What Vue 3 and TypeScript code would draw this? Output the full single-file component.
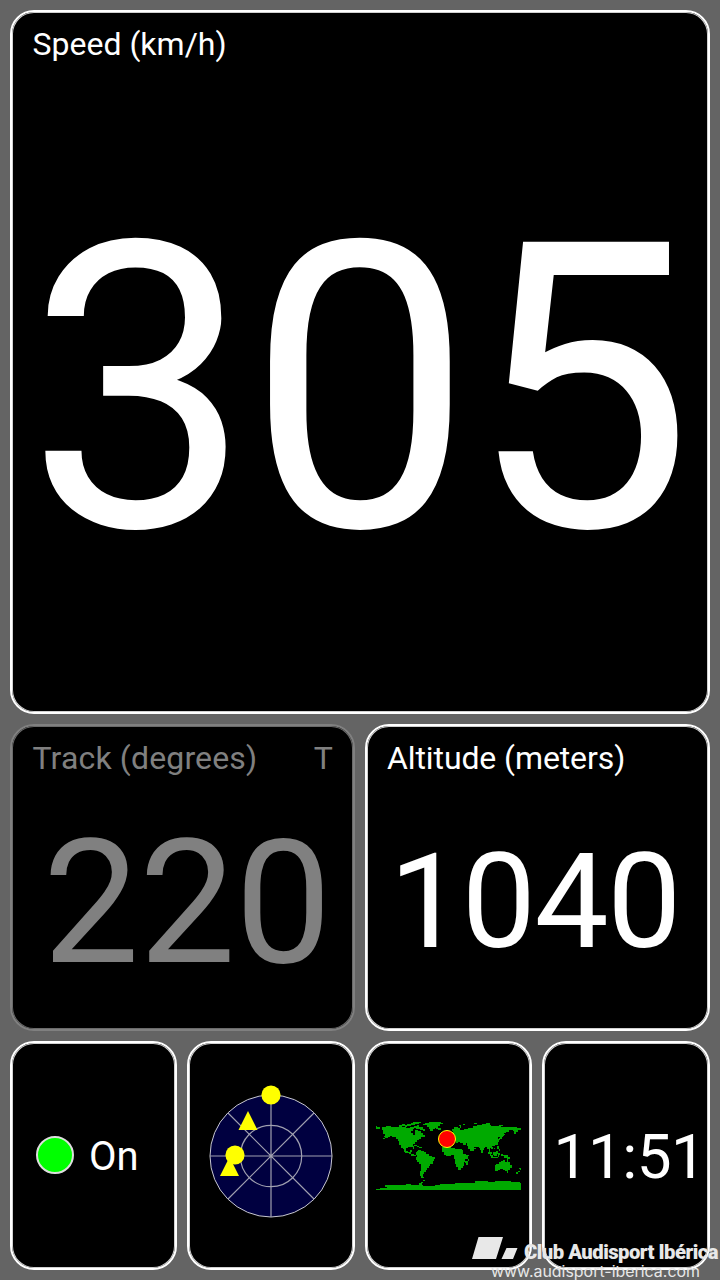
<script setup lang="ts">
interface Mark { kind: 'circle' | 'triangle'; x: number; y: number }

const speed = 305
const track = 220
const altitude = 1040
const clock = '11:51'

const satellites: Mark[] = [
  { kind: 'circle', x: 0, y: -61 },
  { kind: 'triangle', x: -23, y: -35 },
  { kind: 'triangle', x: -41.5, y: 11 },
  { kind: 'circle', x: -36, y: -1 },
]

const triangle = (m: Mark): string =>
  `${m.x},${m.y - 10} ${m.x + 9.5},${m.y + 9} ${m.x - 9.5},${m.y + 9}`

// Land masses, in thirds of a pixel
const land: string[] = [
  'M18 48h4v4h8v4H18z',
  'M36 51h12v-2h16v2h24v-2h8v3h12v3h12v-3h12v6h-4v6h-6v4h6v6h8v-6h-2v-9h10v3h8v6h6v8h8v6h-12v4h-6v5h-8v6h-6v6h-4v5h2v8h-4v-6h-14v4h-5v8h5v3h6v-4h6v5h-2v6h8v4h6v3h-8v-2h-6v-4h-8v-3h-10v-4h-4v-8h-4v-5h-6v-7h-4v-14h-4v-6h-7v-5h-10v-3h-8v4h-6v3h-8v2h-5v-2h6v-4h-4v-4h4v-5h-6z',
  'M86 44h10v-3h8v3h8v-3h10v-2h8v-3h24v3h-8v3h-10v4h-6v-2h-8v4h-10v3h-8v-3h-10v-1h-8z M132 48h8v-2h8v4h10v6h6v8h-6v-4h-8v-4h-12v-3h-6z',
  'M160 42h6v-3h12v-3h34v2h6v3h-8v8h-5v4h-9v4h-8v6h-8v-5h-4v-8h-4v-5h-12z',
  'M200 54h12v5h-9v-2h-4z M132 105h10v3h6v3h8v3h-8v-2h-8v-3h-8z',
  'M140 124h5v-3h8v2h10v3h6v5h8v6h9v4h9v6h-3v7h-4v9h-7v4h-4v8h-5v5h-5v6h-4v5h-5v9h4v4h-9v-5h-2v-15h2v-21h-6v-6h-5v-8h-4v-9h2v-6h-2z',
  'M18 237h12v-4h20v-2h-4v-5h12v-2h50v-2h16v2h24v-4h6v-5h4v-4h8v3h-6v6h-4v5h4v3h34v-3h16v-3h44v-2h36v-2h26v-4h38v2h22v-3h48v3h26v4h10v5h-6v6h12v4h9v5H18z',
  'M217 111h10v-3h16v5h12v3h20v5h4v10h8v4h10v4h-4v8h-8v10h-3v10h-4v8h-6v4h-9v-7h-4v-11h-3v-15h-4v-12h-9v3h-14v-3h-7v-7h-5z',
  'M285 152h8v-4h3v6h-3v11h-6v-5h-2z',
  'M218 97h10v-6h-6v-4h12v-7h12v-11h4v-6h-3v-6h6v-5h12v3h6v5h12v-3h12v-4h15v-5h12v-3h14v-3h16v4h12v3h30v3h24v-2h22v3h22v5h-8v3h-10v4h-7v6h-4v-8h-5v-3h-12v5h-8v4h-7v8h-5v10h-6v-5h-5v5h3v9h-4v8h-10v3h-9v5h3v6h-5v-5h-4v12h6v8h-4v-5h-5v-12h-4v-6h-6v4h-4v5h-3v9h-5v-7h-3v-8h-5v-3h-14v5h6v3h-6v5h-12v-6h-5v-10h-3v-8h-5v5h-9v-4h-9v-4h-6v4h-6v-6h-5v6h-11v6h-14z',
  'M229 71h6v6h5v9h-10v-3h3v-5h-4z M224 78h4v5h-5z',
  'M268 44h12v-2h6v4h-14v7h-3z M299 41h14v-3h8v4h-22z M347 40h14v4h-14z M386 46h12v3h-12z',
  'M398 72h6v3h-4v7h-3v5h-7v3h-6v4h-8v-4h10v-4h7v-5h4z M388 84h8v4h-8z',
  'M354 126h5v4h5v6h5v7h-5v-5h-5v-5h-5z M370 126h8v-4h6v11h-4v5h-8v-4h-4z M367 141h18v4h-18z M384 130h6v4h-3v7h-3z M382 107h4v9h4v7h-4v-5h-4z M392 132h8v3h15v5h5v6h-8v-3h-10v-4h-10z M372 113h4v3h-4z',
  'M374 165h5v-4h8v-5h5v-3h6v-3h6v5h6v-7h4v9h6v7h5v10h-5v6h-7v3h-8v-3h-5v-4h-9v3h-8v3h-9z M410 184h5v4h-5z M438 186h7v-4h6v-5h-3v-3h6v4h4v3h-7v5h-6v5h-7z',
]
</script>

<template>
  <main class="dashboard">
    <section class="tile speed">
      <header><span>Speed (km/h)</span></header>
      <div class="value"><span>{{ speed }}</span></div>
    </section>

    <section class="tile track">
      <header><span>Track (degrees)</span><span class="north">T</span></header>
      <div class="value"><span>{{ track }}</span></div>
    </section>

    <section class="tile altitude">
      <header><span>Altitude (meters)</span></header>
      <div class="value"><span>{{ altitude }}</span></div>
    </section>

    <section class="tile small status">
      <i class="lamp"></i><span>On</span>
    </section>

    <section class="tile small">
      <svg class="radar" viewBox="-72 -72 144 144">
        <circle r="61" class="disc" />
        <circle r="30.7" class="ring" />
        <path d="M-61 0H61M0-61V61M-43-43L43 43M-43 43L43-43" class="ring" />
        <template v-for="(m, i) in satellites" :key="i">
          <circle v-if="m.kind === 'circle'" :cx="m.x" :cy="m.y" r="9.6" class="sat" />
          <polygon v-else :points="triangle(m)" class="sat" />
        </template>
      </svg>
    </section>

    <section class="tile small">
      <svg class="world" viewBox="18 27 435 219">
        <path v-for="(d, i) in land" :key="i" :d="d" class="land" />
        <circle cx="231" cy="87" r="25.5" class="here" />
      </svg>
    </section>

    <section class="tile small clock"><span>{{ clock }}</span></section>

    <svg class="watermark" viewBox="0 0 260 50">
      <path d="M18.5 7H43L36 29H12z M46.5 18H57.5L53 29H41.5z" />
      <text x="64" y="29" class="club" textLength="194" lengthAdjust="spacingAndGlyphs">Club Audisport Ibérica</text>
      <text x="31" y="46.5" class="url" textLength="209" lengthAdjust="spacingAndGlyphs">www.audisport-iberica.com</text>
    </svg>
  </main>
</template>

<style>
html, body { margin: 0; background: #646464; overflow: hidden; }
</style>

<style scoped>
.dashboard {
  position: relative;
  box-sizing: border-box;
  width: 720px;
  height: 1280px;
  padding: 10px;
  display: grid;
  grid-template-columns: 167px 168px 167px 168px;
  grid-template-rows: 704px 307px 229px;
  gap: 10px;
  background: #646464;
  color: #fff;
  font-family: Roboto, sans-serif;
}
.tile {
  box-sizing: border-box;
  min-width: 0;
  display: flex;
  flex-direction: column;
  border: 2px solid currentColor;
  border-radius: 24px;
  box-shadow: inset 0 0 0 1px #d0d0d0;
  background: #000;
}
.speed { grid-column: span 4; }
.track, .altitude { grid-column: span 2; }
.track { color: #808080; box-shadow: inset 0 0 0 1px #6a6a6a; }
header {
  display: flex;
  justify-content: space-between;
  height: 38px;
  padding: 13px 20px 0 20.5px;
  font-size: 32px;
  line-height: 38px;
}
.track header { letter-spacing: 0.15px; }
.altitude header { letter-spacing: -0.1px; padding-left: 20px; }
.value {
  display: flex;
  justify-content: center;
  line-height: 1;
  white-space: nowrap;
}
.speed .value { font-size: 400px; padding: 127px 4px 0 0; letter-spacing: -4px; }
.track .value { font-size: 172px; padding: 40px 0 0 9px; letter-spacing: -0.5px; }
.altitude .value { font-size: 132px; padding: 59px 6px 0 0; letter-spacing: -1.5px; }
.small { flex-direction: row; align-items: center; justify-content: center; }
.status { font-size: 40px; justify-content: flex-start; padding-left: 24px; gap: 15px; }
.status span { padding-top: 1px; }
.lamp {
  box-sizing: border-box;
  width: 38px;
  height: 38px;
  margin-bottom: 1px;
  border: 2px solid #ddd;
  border-radius: 50%;
  background: #0f0;
}
.radar { flex: none; width: 144px; height: 144px; margin-right: 1px; }
.disc { fill: #000040; stroke: #c8c8d0; stroke-width: 1; }
.ring { fill: none; stroke: #a0a0b0; stroke-width: 1.2; }
.sat { fill: #ff0; }
.world { flex: none; width: 145px; height: 73px; }
.land { fill: #0a0; shape-rendering: crispEdges; }
.here { fill: #f00; stroke: #ff0; stroke-width: 3; }
.clock { font-size: 62px; letter-spacing: -0.5px; padding: 1px 0 0 7px; }
.watermark {
  position: absolute;
  left: 460px;
  top: 1230px;
  width: 260px;
  height: 50px;
  overflow: visible;
  fill: #e8e8e8;
}
.club { font: 900 19.5px Roboto, sans-serif; letter-spacing: -0.5px; }
.url { font: 15px Inter, sans-serif; }
</style>
